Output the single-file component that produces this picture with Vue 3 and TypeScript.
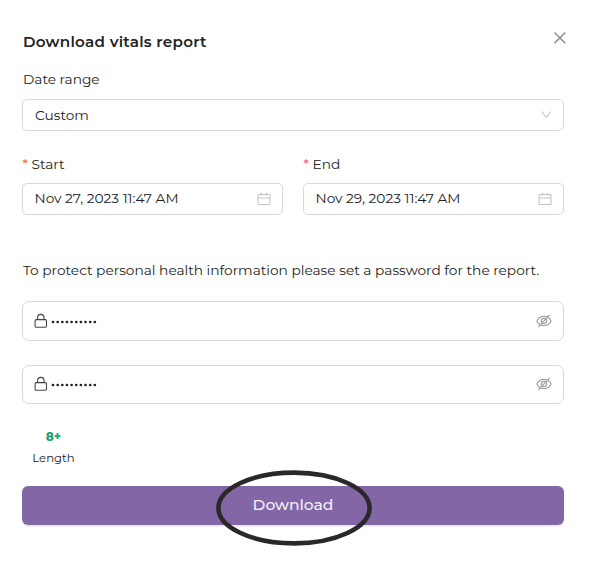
<script setup lang="ts">
import { ref } from 'vue'

interface DateField { label: string; value: string }

const range = ref('Custom')
const dates = ref<DateField[]>([
  { label: 'Start', value: 'Nov 27, 2023 11:47 AM' },
  { label: 'End', value: 'Nov 29, 2023 11:47 AM' },
])
const dotPositions = Array.from({ length: 10 }, (_, i) => 2 + i * 4.65)
const passwords = ['password', 'confirm']
</script>

<template>
  <main class="dialog">
    <header class="head">
      <h1>Download vitals report</h1>
      <svg class="close" viewBox="0 0 14 14"><path d="M1.5 1.5 12.3 12.3M12.3 1.5 1.5 12.3" /></svg>
    </header>

    <div class="label range-label">Date range</div>
    <div class="field select">
      <span>{{ range }}</span>
      <svg class="chevron" viewBox="0 0 12 10"><path d="M1.8 1.5 6.3 7.6 10.8 1.5" /></svg>
    </div>

    <div class="dates">
      <div v-for="d in dates" :key="d.label" class="date">
        <div class="label"><span class="star">*</span><span>{{ d.label }}</span></div>
        <div class="field picker">
          <span>{{ d.value }}</span>
          <svg class="calendar" viewBox="0 0 14 14">
            <path d="M1 2.5h12v10H1zM1 6h12M4.2.7v3M9.8.7v3" />
          </svg>
        </div>
      </div>
    </div>

    <p class="note">To protect personal health information please set a password for the report.</p>

    <div v-for="p in passwords" :key="p" class="field password" :class="p">
      <svg class="lock" viewBox="0 0 14 16">
        <rect x="1.1" y="6.6" width="11.4" height="7.6" rx="1.2" />
        <path d="M3.6 6.5V4.6a3.2 3.2 0 0 1 6.4 0v1.9" />
      </svg>
      <svg class="dots" viewBox="0 0 48 4">
        <circle v-for="x in dotPositions" :key="x" :cx="x" cy="2" r="1.35" />
      </svg>
      <svg class="eye" viewBox="0 0 16 14">
        <path d="M.9 7C3.8.9 12.2.9 15.1 7 12.2 13.1 3.8 13.1.9 7Z" />
        <circle cx="8" cy="7" r="2.7" />
        <path d="M13.6.9 2.4 13" />
      </svg>
    </div>

    <div class="rule">
      <strong>8+</strong>
      <span>Length</span>
    </div>

    <button class="download" type="button">
      Download
      <svg class="ring" viewBox="0 0 158 78"><ellipse cx="79" cy="39" rx="75.6" ry="35.4" /></svg>
    </button>
  </main>
</template>

<style>
body { background: #fff; }
</style>

<style scoped>
.dialog {
  box-sizing: border-box;
  width: 603px;
  height: 579px;
  padding: 27px 39px 0 22px;
  font-family: Montserrat, Inter, sans-serif;
  font-size: 13.72px;
  line-height: 20px;
  white-space: nowrap;
  color: #222;
}
svg { display: block; flex: none; fill: none; overflow: visible; }
.head { display: flex; justify-content: space-between; height: 30px; }
h1 { margin: 0; padding-left: 1px; font-size: 15.2px; letter-spacing: 0.25px; line-height: 30px; font-weight: 600; color: #222; }
.close { width: 14px; height: 14px; margin: 4px -3px 0 0; stroke: #888; stroke-width: 1.4; }
.label { display: flex; height: 20px; padding-left: 1px; }
.range-label { margin-top: 12px; }
.field {
  box-sizing: border-box;
  display: flex;
  align-items: center;
  justify-content: space-between;
  border: 1px solid #d9d9d9;
  border-radius: 5px;
  padding: 0 11px 0 12px;
}
.select { height: 32px; margin-top: 10px; padding-bottom: 1px; }
.chevron { width: 12px; height: 10px; stroke: #b8b8b8; stroke-width: 1; }
.dates { display: grid; grid-template-columns: 261px 261px; justify-content: space-between; margin-top: 23px; }
.date .label { padding-left: 0.5px; }
.star { width: 9px; color: #f04a35; }
.picker { height: 32px; margin-top: 9px; padding: 0 11px 2px 11.5px; }
.calendar { width: 14px; height: 14px; margin-top: 2px; stroke: #c2c2c2; stroke-width: 1; }
.note { margin: 45px 0 0; padding-left: 1px; height: 20px; }
.password { height: 40px; margin-top: 21px; border-radius: 7px; }
.password.confirm { height: 39px; margin-top: 24px; padding-bottom: 1px; }
.lock { width: 14px; height: 16px; margin-right: 2px; margin-left: -1px; stroke: #444; stroke-width: 1.1; }
.dots { width: 48px; height: 4px; margin: 2px auto 0 1px; fill: #222; }
.eye { width: 16px; height: 14px; stroke: #a3a3a3; stroke-width: 1.2; }
.rule { display: flex; flex-direction: column; align-items: center; width: 63px; height: 59px; margin-top: 23px; font-size: 11.7px; }
.rule strong { height: 21px; font-size: 12px; font-weight: 800; color: #27a376; }
.download {
  position: relative;
  display: flex;
  justify-content: center;
  width: 542px;
  height: 39px;
  margin: 0;
  padding: 0;
  border: 0;
  border-radius: 6px;
  background: #8266a6;
  box-shadow: 0 2px 0 #f0ebf4;
  font-family: inherit;
  font-size: 15.5px;
  font-weight: 500;
  line-height: 38px;
  color: #f4f0f8;
}
.ring { position: absolute; left: 193px; top: -17px; width: 158px; height: 78px; stroke: #2c2829; stroke-width: 4.6; }
</style>
